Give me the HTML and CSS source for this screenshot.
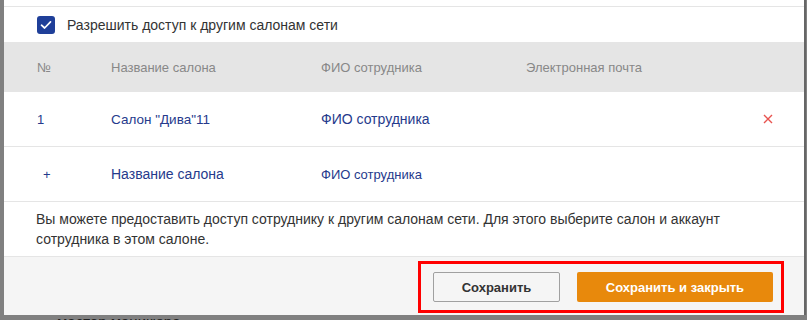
FILE: index.html
```html
<!DOCTYPE html>
<html>

<head>
    <meta charset="UTF-8">
    <title>Доступ к салонам сети</title>
    <link rel="stylesheet" href="styles.css">
</head>

<body>
    <div class="modal">
        <div class="modal-top"></div>
        <label class="access-check">
            <span class="check-box">
                <svg width="12" height="10" viewBox="0 0 12 10">
                    <path d="M1.5 5.2 L4.6 8 L10.5 1.8" fill="none" stroke="#fff" stroke-width="1.7" stroke-linecap="round" stroke-linejoin="round"/>
                </svg>
            </span>
            Разрешить доступ к другим салонам сети
        </label>

        <div class="salon-table">
            <div class="table-row table-head">
                <span>№</span>
                <span>Название салона</span>
                <span>ФИО сотрудника</span>
                <span>Электронная почта</span>
                <span></span>
            </div>
            <div class="table-row">
                <span class="cell-num">1</span>
                <span class="cell-salon cell-narrow">Салон "Дива"11</span>
                <span class="cell-person">ФИО сотрудника</span>
                <span></span>
                <span class="cell-remove">
                    <svg width="10" height="10" viewBox="0 0 10 10">
                        <path d="M1 1 L9 9 M9 1 L1 9" stroke="#e8534f" stroke-width="1.4"/>
                    </svg>
                </span>
            </div>
            <div class="table-row">
                <span class="cell-num cell-add">+</span>
                <span class="cell-salon">Название салона</span>
                <span class="cell-person cell-small">ФИО сотрудника</span>
                <span></span>
                <span></span>
            </div>
        </div>

        <p class="note">Вы можете предоставить доступ сотруднику к другим салонам сети. Для этого выберите салон и аккаунт сотрудника в этом салоне.</p>

        <div class="modal-footer">
            <div class="footer-actions">
                <button class="btn btn-save">Сохранить</button>
                <button class="btn btn-save-close">Сохранить и закрыть</button>
            </div>
        </div>
    </div>
    <div class="page-behind">мастер маникюра</div>
</body>

</html>
```

FILE: styles.css
```css
body {
    margin: 0;
    padding: 0;
    background-color: #808080;
    font-family: "Liberation Sans", Arial, sans-serif;
    color: #333;
    height: 320px;
    overflow: hidden;
}

.modal {
    width: 800px;
    margin-left: 4px;
    background-color: #fff;
    border-right: 2px solid #666;
}

.modal-top {
    height: 6px;
    border-bottom: 1px solid #e5e5e5;
}

.access-check {
    display: flex;
    align-items: center;
    height: 35px;
    padding-left: 33px;
    font-size: 14px;
    color: #333;
}

.check-box {
    display: flex;
    align-items: center;
    justify-content: center;
    width: 18px;
    height: 18px;
    margin-right: 12px;
    border-radius: 3px;
    background-color: #1f3f99;
}

.table-row {
    display: grid;
    grid-template-columns: 74px 210px 205px 1fr 40px;
    align-items: center;
    height: 54px;
    padding-left: 33px;
    padding-right: 16px;
    border-bottom: 1px solid #e5e5e5;
    font-size: 14px;
    color: #253a8c;
}

.table-head {
    height: 50px;
    background-color: #e5e5e5;
    border-bottom: none;
    font-size: 13px;
    color: #888;
}

.cell-num {
    font-size: 13px;
}

.cell-add {
    padding-left: 6px;
}

.cell-narrow {
    font-size: 13.5px;
}

.cell-person {
    font-size: 14px;
}

.cell-small {
    font-size: 13px;
}

.cell-remove {
    display: flex;
    justify-content: center;
}

.note {
    margin: 0;
    padding: 7px 32px 7px 32px;
    font-size: 14px;
    line-height: 20px;
    color: #333;
}

.modal-footer {
    display: flex;
    justify-content: flex-end;
    height: 54px;
    padding: 4px 20px 0 0;
    background-color: #f5f5f5;
    border-top: 1px solid #e5e5e5;
}

.footer-actions {
    display: flex;
    gap: 17px;
    height: 30px;
    padding: 8px 8px 8px 12px;
    border: 3px solid #f00;
}

.btn {
    height: 30px;
    border-radius: 2px;
    font-family: "Liberation Sans", Arial, sans-serif;
    font-size: 13px;
    font-weight: bold;
    cursor: pointer;
}

.btn-save {
    width: 127px;
    background-color: #f5f5f5;
    border: 1px solid #a0a0a0;
    color: #333;
}

.btn-save-close {
    width: 196px;
    background-color: #e8890c;
    border: none;
    color: #fff;
}

.page-behind {
    margin-top: -2px;
    padding-left: 57px;
    font-size: 15px;
    color: #222;
}
```
